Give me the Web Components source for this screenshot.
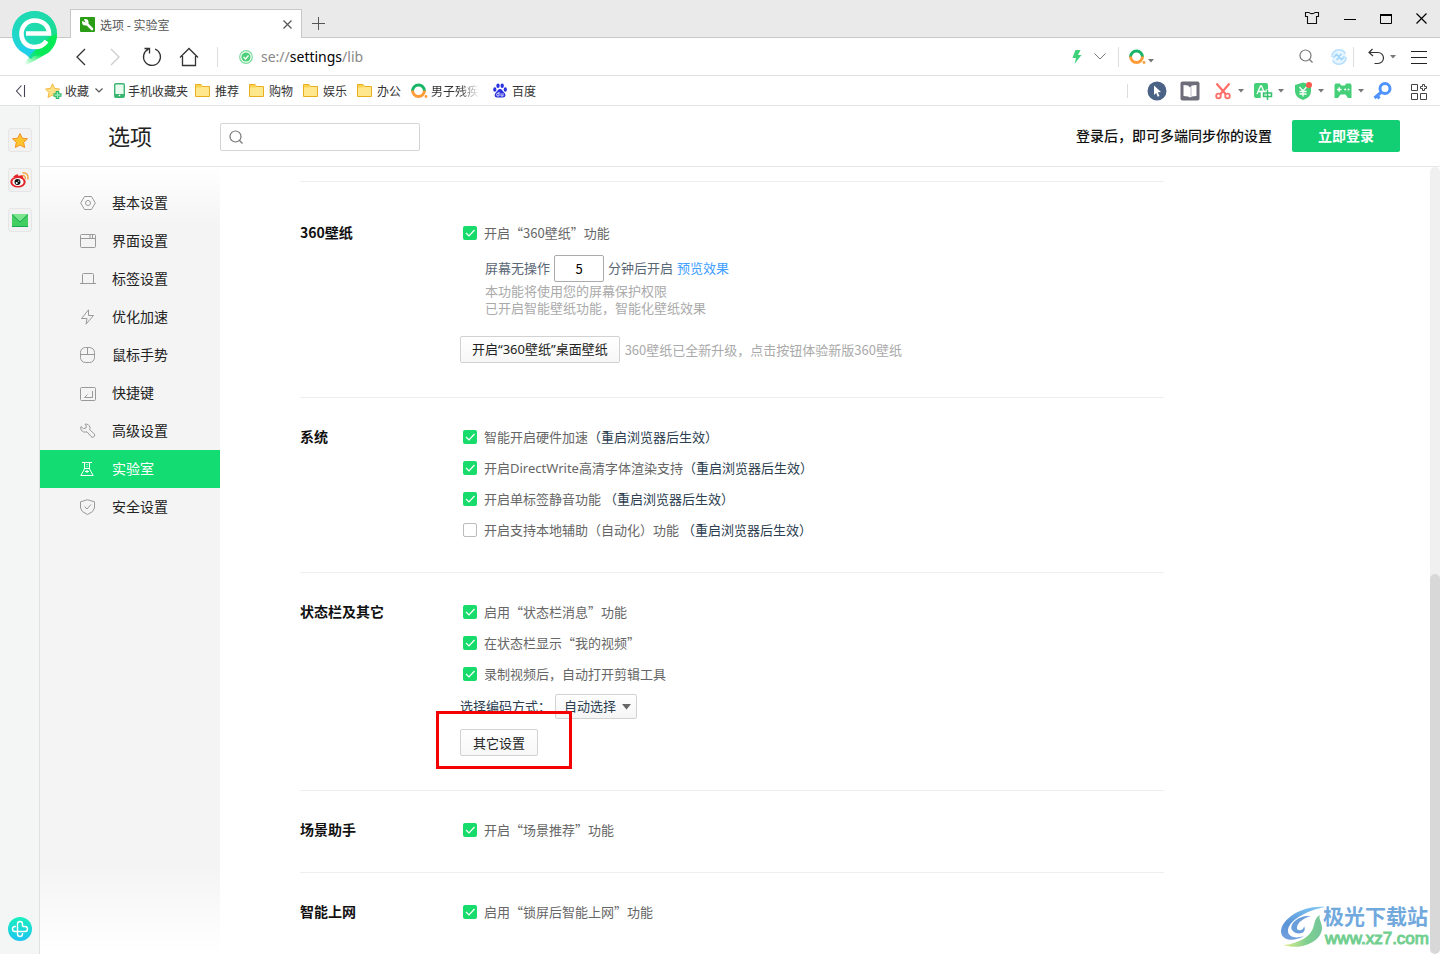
<!DOCTYPE html>
<html lang="zh-CN">
<head>
<meta charset="utf-8">
<title>选项 - 实验室</title>
<style>
html,body{margin:0;height:100%}
body{font:13px/17px "Noto Sans CJK SC","Open Sans",sans-serif;color:#333;background:#fff;overflow:hidden}
</style>
</head>
<body>
<browser-app></browser-app>
<script>
const define=(name,html,setup)=>customElements.define(name,class extends HTMLElement{
  connectedCallback(){
    if(this.shadowRoot)return;
    const t=document.createElement('template');
    t.innerHTML=typeof html==='function'?html(this):html;
    this.attachShadow({mode:'open'}).append(t.content.cloneNode(true));
    if(setup)setup(this,this.shadowRoot);
  }
});
const BTN='button{appearance:none;border:0;background:none;padding:0;margin:0;font:inherit;color:inherit;display:flex;align-items:center;justify-content:center;cursor:pointer}';
const ring='<path d="M2.5 9A6 6 0 0 1 14.5 9" fill="none" stroke="#18b566" stroke-width="3"/><path d="M2.5 8.5A6 6 0 0 0 14.5 8.5" fill="none" stroke="#ff9c38" stroke-width="3"/><circle cx="16" cy="14.5" r="1.4" fill="#ff9c38"/>';
/* name: [width, height, drawing] */
const ICONS={
logo:[48,58,'<defs><linearGradient id="g" x1="1" y1="0.4" x2="0" y2="0.8"><stop offset="0" stop-color="#10e060"/><stop offset=".45" stop-color="#1fdfa8"/><stop offset="1" stop-color="#20d2f2"/></linearGradient><linearGradient id="t" gradientUnits="userSpaceOnUse" x1="36" y1="36" x2="16" y2="57"><stop offset=".35" stop-color="#06ea58"/><stop offset="1" stop-color="#06ea58" stop-opacity="0"/></linearGradient><linearGradient id="top" x1="0" y1="0" x2="0" y2="1"><stop offset="0" stop-color="#1fd9b4"/><stop offset="1" stop-color="#1fd9b4" stop-opacity="0"/></linearGradient></defs><circle cx="23.500" cy="23.500" r="22.500" fill="url(#g)"/><circle cx="23.500" cy="23.500" r="22.500" fill="url(#top)"/><path d="M5 36L20 49L32 36z" fill="#20cfe8"/><path d="M46 24C46 33 42 39 37 43L14 56H12L20 44L40 26z" fill="url(#t)"/><path d="M15 23.500H38C38 15.500 31.500 10.500 23.500 10.500C16 10.500 10.500 16.500 10.500 24C10.500 31.500 16 37 23.500 37C29 37 33 35 35.500 31" fill="none" stroke="#fff" stroke-width="4.600"/>'],
wrench:[15,15,'<rect width="15" height="15" rx="1" fill="#2a9c16"/><path d="M6 6L12 12" stroke="#fff" stroke-width="2.600" stroke-linecap="round"/><circle cx="5.300" cy="5.300" r="3.200" fill="#fff"/><path d="M5.500 5.500L1.500 3.500L3.500 1.500z" fill="#2a9c16"/>'],
x:[9,9,'<path d="M.5 .5L8.500 8.500M8.500 .5L.5 8.500" stroke="#555" stroke-width="1.200"/>'],
plus:[13,13,'<path d="M6.500 0V13M0 6.500H13" stroke="#555"/>'],
shirt:[16,14,'<path d="M5 1.500H1.500V5.500H3.500V12.500H12.500V5.500H14.500V1.500H11C10 3 6 3 5 1.500z" fill="none" stroke="#111" stroke-width="1.100"/>'],
min:[12,12,'<path d="M0 7.500H12" stroke="#000"/>'],
max:[12,12,'<path d="M.5 2.500H11.500V11.500H.5z" fill="none" stroke="#000"/><path d="M0 3H12" stroke="#000" stroke-width="2"/>'],
close:[11,11,'<path d="M.5 .5L10.500 10.500M10.500 .5L.5 10.500" stroke="#000" stroke-width="1.200"/>'],
back:[10,18,'<path d="M9 1L1 9L9 17" fill="none" stroke="#333" stroke-width="1.300"/>'],
fwd:[10,18,'<path d="M1 1L9 9L1 17" fill="none" stroke="#ccc" stroke-width="1.300"/>'],
reload:[20,20,'<path d="M13 2A8.500 8.500 0 1 1 6.500 2.200M2.500 1.500H7.500V6.500" fill="none" stroke="#333" stroke-width="1.300"/>'],
home:[20,20,'<path d="M1 10.500L10 1.500L19 10.500M3.500 9V18.500H16.500V9" fill="none" stroke="#333" stroke-width="1.300"/>'],
secure:[14,14,'<circle cx="7" cy="7" r="6.300" fill="none" stroke="#7bdc9c" stroke-width="1.200"/><circle cx="7" cy="7" r="4.600" fill="#4bcf79"/><path d="M4.500 7L6.500 9L9.500 5.500" fill="none" stroke="#fff" stroke-width="1.200"/>'],
bolt:[10,14,'<path d="M3.500 0H8.500L6 5H9.500L2.500 14L4 8H.5z" fill="#3fd07a"/>'],
chev:[12,7,'<path d="M.5 .5L6 6L11.500 .5" fill="none" stroke="#777"/>'],
chevs:[8,5,'<path d="M.5 .5L4 4L7.500 .5" fill="none" stroke="#555" stroke-width="1.200"/>'],
ring:[18,17,ring],
caret:[6,4,'<path d="M0 0H6L3 3.500z" fill="#777"/>'],
search:[15,15,'<circle cx="6.500" cy="6.500" r="5.500" fill="none" stroke="#777" stroke-width="1.200"/><path d="M10.500 10.500L13.500 13.500" stroke="#777" stroke-width="1.200"/>'],
shield360:[16,16,'<circle cx="8" cy="8" r="7.200" fill="#e6f5ff" stroke="#b5dffd" stroke-width="1.600" stroke-dasharray="19 3.600"/><path d="M2.500 8.500L5.500 5.500L10.500 10.500L13.500 7.500M5.500 11L8 8.500M8 7.500L10.500 5" fill="none" stroke="#9fd5fb" stroke-width="1.600"/>'],
undo:[16,17,'<path d="M4.500 1L1 4.500L5 8M1 4.500H10A5.500 5.500 0 0 1 10 15.500H6.500" fill="none" stroke="#333" stroke-width="1.200"/>'],
menu:[16,14,'<path d="M0 1.500H16M0 7.500H16M0 13.500H16" stroke="#222"/>'],
fold:[10,12,'<path d="M5.500 .5L.5 6L5.500 11.500M8.500 0V12" fill="none" stroke="#445" stroke-width="1.100"/>'],
fav:[17,16,'<path d="M7.500 .8L9.600 5.400L14.500 6L11 9.500L11.700 14.500L7.500 12L3 14.500L4 9.500L.6 6L5.500 5.400z" fill="#ffe187" stroke="#f6b83d"/><path d="M12.500 8V16M8.500 12H16.500" stroke="#26b866" stroke-width="3.600"/><path d="M12.500 9V15M9.500 12H15.500" stroke="#9beab9" stroke-width="1.300"/>'],
phone:[11,15,'<rect x=".7" y=".7" width="9.600" height="13.600" rx="1.200" fill="#e9faef" stroke="#3bb670" stroke-width="1.400"/><path d="M1 11H10V14H1z" fill="#3bb670"/><circle cx="5.500" cy="12.500" r=".8" fill="#fff"/>'],
folder:[15,13,'<path d="M.5 .5H6L7.500 2.500H14.500V12.500H.5z" fill="#ffe78e" stroke="#e9ae20"/><path d="M1 1H6L7 2.500L6 3.500H1z" fill="#ffd351"/>'],
baidu:[14,15,'<g fill="#2a32df"><ellipse cx="1.800" cy="6.500" rx="1.600" ry="2.200"/><ellipse cx="5" cy="2.700" rx="1.700" ry="2.300"/><ellipse cx="9.200" cy="2.700" rx="1.700" ry="2.300"/><ellipse cx="12.300" cy="6.500" rx="1.600" ry="2.200"/><path d="M7 6C9 6 9.500 8 11 9.500C13.500 11.500 12.500 14.500 10 14.500H4C1.500 14.500 .8 11.500 3 9.500C4.500 8 5 6 7 6z"/></g><path d="M6 10.200H5A1.300 1.300 0 0 0 5 13H6V8.800M8 10.200V13H10V10.200" fill="none" stroke="#fff" stroke-width=".8"/>'],
cursor:[20,20,'<circle cx="10" cy="10" r="9.500" fill="#4a6285"/><path d="M7 4.500L14 11L10.800 11.300L12.500 15L10.700 15.800L9.200 12L7 14z" fill="#fff"/>'],
book:[20,20,'<rect x=".5" y=".5" width="19" height="19" rx="2" fill="#6c6d78"/><path d="M3.500 4L8 4.500L10 6.500L12 4.500L16.500 4V15L12 15.500L10 16.500L8 15.500L3.500 15z" fill="#fff"/><path d="M10 6.500V16L12 15V4.500z" fill="#dcdce2"/>'],
cut:[20,20,'<g fill="none" stroke="#ff6e68" stroke-width="2.200"><path d="M3.500 2.500L13 13.500M16.500 2.500L7 13.500"/><circle cx="5.500" cy="15" r="2.300" stroke-width="1.800"/><circle cx="14.500" cy="15" r="2.300" stroke-width="1.800"/></g>'],
trans:[20,20,'<rect x="1" y="2" width="14" height="15" rx="2" fill="#45cf78"/><path d="M4 13L7.500 5H8.500L12 13M5.500 10.500H10.500" fill="none" stroke="#fff" stroke-width="1.300"/><path d="M14.500 8.500V19.500M9.500 11.500H19.500V16H9.500z" fill="none" stroke="#fff" stroke-width="3.500"/><path d="M14.500 9V19M10.500 12H18.500V15.500H10.500z" fill="none" stroke="#36c16c" stroke-width="1.500"/>'],
yen:[20,20,'<path d="M10 1.500L18 4V10C18 14.500 14.500 17.500 10 19C5.500 17.500 2 14.500 2 10V4z" fill="#45cf78"/><path d="M6.500 6L10 10L13.500 6M10 10V15.500M6.500 10.500H13.500M6.500 13H13.500" fill="none" stroke="#fff" stroke-width="1.300"/><circle cx="16" cy="4" r="3" fill="#fa5b50"/>'],
game:[20,20,'<path d="M2.500 2.500H7L8 4.500H12L13 2.500H17.500L18.500 4V17H15L12.500 13.500H7.500L5 17H1.500V4z" fill="#45cf78"/><path d="M4 8.500H8.500M6.200 6.200V10.800" stroke="#fff" stroke-width="1.400"/><circle cx="12.200" cy="8.500" r="1" fill="#fff"/><circle cx="15.500" cy="8.500" r="1" fill="#fff"/>'],
key:[20,20,'<circle cx="12" cy="7.500" r="5" fill="none" stroke="#4f93ff" stroke-width="3"/><path d="M8.500 11L1.500 17M4 14.500L6.500 17.500" fill="none" stroke="#4f93ff" stroke-width="3"/>'],
apps:[20,20,'<path d="M3.500 3.500H9.500V9.500H3.500zM3.500 12.500H9.500V18.500H3.500zM12.500 12.500H18.500V18.500H12.500z" fill="none" stroke="#444"/><path d="M14.500 3.500H16.500V5.500H18.500V7.500H16.500V9.500H14.500V7.500H12.500V5.500H14.500z" fill="none" stroke="#444"/>'],
star:[16,15,'<path d="M8 .5L10.300 5.200L15.500 5.800L11.700 9.300L12.600 14.500L8 12L3.400 14.500L4.300 9.300L.5 5.800L5.700 5.200z" fill="#ffc52e" stroke="#f29227"/>'],
weibo:[20,16,'<ellipse cx="8" cy="10" rx="7.700" ry="5.500" fill="#e3252b"/><path d="M3 5Q8 0 8.500 4Q14 2 13 6L8 7z" fill="#e3252b"/><ellipse cx="8" cy="10" rx="5.600" ry="4" fill="#fff"/><circle cx="7.500" cy="10" r="3" fill="#111"/><circle cx="6.700" cy="11" r="1.100" fill="#fff"/><circle cx="8.700" cy="9.200" r=".6" fill="#fff"/><path d="M12 3.500Q15.500 3 15.500 7M12.500 .8Q19 .5 18 7.500" fill="none" stroke="#f4a13b" stroke-width="1.400"/>'],
mail:[16,13,'<rect width="16" height="13" rx="1" fill="#43ce62"/><path d="M0 0H16L8 8z" fill="#7ae58d"/><path d="M0 .5L8 8L16 .5M0 12.500H16" fill="none" stroke="#1ba552"/>'],
cross:[24,24,'<defs><linearGradient id="c" x2="0" y2="1"><stop stop-color="#19f0be"/><stop offset="1" stop-color="#1cc4f0"/></linearGradient></defs><circle cx="12" cy="12" r="12" fill="url(#c)"/><path d="M14.500 9.500V7A2.500 2.500 0 0 0 9.500 7V17A2.500 2.500 0 0 0 14.500 17V16M14.500 9.500H17A2.500 2.500 0 0 1 17 14.500H7A2.500 2.500 0 0 1 7 9.500H8" fill="none" stroke="#fff" stroke-width="1.400"/>'],
hex:[16,16,'<path d="M4.500 1.500H11.500L15.300 8L11.500 14.500H4.500L.7 8z"/><circle cx="8" cy="8" r="2.500"/>'],
win:[16,16,'<rect x=".5" y="1.500" width="15" height="13" rx="1"/><path d="M.5 5.500H15.500M10 2V5M12.500 2V5"/>'],
tab:[16,16,'<path d="M0 12.500H16M2.500 12V3.500Q2.500 2.500 3.500 2.500H12.500Q13.500 2.500 13.500 3.500V12"/>'],
flash:[16,16,'<path d="M8.500 .8L1.500 9.500H7L6 15.200L13.500 6.500H8.500z"/>'],
mouse:[16,16,'<rect x=".5" y=".5" width="14" height="15" rx="5"/><path d="M.5 7.500H14.500M7.500 .5V7.500"/>'],
keyb:[16,16,'<rect x=".5" y="2.500" width="15" height="13" rx="1"/><path d="M12.500 6V12.500H4.500L7.500 9.500"/>'],
tool:[16,16,'<path d="M5 1.200Q9 .5 10 4.500Q10 6 9.500 6.500L14.500 11Q15.500 13.500 13 14.300Q12 14.500 11 13.500L7 8.800Q3 10 1.200 7Q.3 5 1 3.500L3.500 5.700L6 5L6.300 3z"/>'],
lab:[16,16,'<path d="M2 1.500H12M4.500 2V8L.8 14.500H13.200L9.500 8V2M4.500 7.500H9.500M5 10.500H9"/><path d="M7 3V13" stroke-dasharray="1 1"/>'],
safe:[16,16,'<path d="M7.500 .7L14.500 2.800V9Q14 13 7.500 15.500Q1 13 .5 9V2.800z"/><path d="M4.500 7.500L7 10L11 5.500"/>'],
drop:[9,6,'<path d="M0 0H9L4.500 5.500z" fill="#666"/>'],
swirl:[46,44,'<defs><linearGradient id="w" x1=".7" y1="0" x2=".4" y2="1"><stop stop-color="#7cc3f2"/><stop offset=".6" stop-color="#5a93d6"/><stop offset="1" stop-color="#6f9fdd"/></linearGradient><linearGradient id="v" x2="1" y2="0"><stop stop-color="#e6ee8f"/><stop offset=".6" stop-color="#7fd08f"/><stop offset="1" stop-color="#74c59a"/></linearGradient></defs><path d="M45 2C22 0 1 14 1 27C2 36 14 37 24 31C16 34 8 32 8 26C8 16 25 6 45 2z" fill="url(#w)"/><path d="M31 11C18 10 9 19 12 25C16 31 28 29 24 21C24 26 16 27 17 22C18 17 24 13 31 11z" fill="#6a9edb"/><path d="M40 10C31 15 38 24 25 33C18 37 10 40 3 40C22 46 42 36 42 23C42 17 38 14 40 10z" fill="url(#v)"/>']
};
define('ui-icon',el=>{const [w,h,d]=ICONS[el.getAttribute('name')];
 return `<style>:host{display:block;flex:none;width:${w}px;height:${h}px}svg{display:block;overflow:visible}.line{fill:none;stroke:currentColor}</style><svg width="${w}" height="${h}" viewBox="0 0 ${w} ${h}" aria-hidden="true"><g${el.hasAttribute('line')?' class="line"':''}>${d}</g></svg>`});
define('v-rule','<style>:host{display:block;flex:none;width:1px;height:20px;background:#ddd}</style>');
define('icon-button',el=>`<style>:host{display:block;flex:none}${BTN}</style><button aria-label="${el.getAttribute('label')}"><ui-icon name="${el.getAttribute('name')}"></ui-icon></button>`);

define('tab-strip',`<style>:host{display:flex;box-sizing:border-box;height:38px;background:#eaeaea;border-bottom:1px solid #c8c8c8;padding:9px 13px 0 70px}
.tab{display:flex;align-items:center;box-sizing:border-box;width:232px;height:29px;background:#fff;border:1px solid #c8c8c8;border-bottom:0;padding:0 9px;font-size:12px;color:#555}
.tab span{flex:1;margin-left:5px}.new{margin:8px 0 0 10px}
.win{display:flex;gap:24px;margin-left:auto;height:18px;align-items:center}</style>
<div class="tab"><ui-icon name="wrench"></ui-icon><span>选项 - 实验室</span><icon-button name="x" label="关闭标签"></icon-button></div>
<icon-button class="new" name="plus" label="新标签"></icon-button>
<div class="win"><icon-button name="shirt" label="皮肤"></icon-button><icon-button name="min" label="最小化"></icon-button><icon-button name="max" label="最大化"></icon-button><icon-button name="close" label="关闭"></icon-button></div>`);

define('nav-bar',`<style>:host{display:flex;align-items:center;box-sizing:border-box;height:38px;border-bottom:1px solid #e2e2e2;padding:0 13px 0 76px}
.nav{display:flex;align-items:center}.fwd{margin:0 22px 0 24px}.home{margin:0 18px 0 17px}
.url{flex:1;display:flex;align-items:center;gap:8px;margin-left:21px;font:14px/20px "Noto Sans","Open Sans",sans-serif;color:#888}
.url b{font-weight:400;color:#000}
.mid{display:flex;align-items:center;gap:12px}
.find{display:flex;align-items:center;gap:2px;margin-left:9px}
input{border:0;outline:0;width:137px;box-sizing:border-box;padding:0 4px;font:inherit;background:none}
.end{display:flex;align-items:center}
.a{margin-left:17px}.b{margin-left:6px}.c{margin-left:14px}.d{margin-left:6px}.e{margin-left:15px}.f{margin-top:8px}</style>
<div class="nav"><icon-button name="back" label="后退"></icon-button><icon-button class="fwd" name="fwd" label="前进"></icon-button><icon-button name="reload" label="刷新"></icon-button><icon-button class="home" name="home" label="主页"></icon-button><v-rule></v-rule></div>
<div class="url"><ui-icon name="secure"></ui-icon><span>se://<b>settings</b>/lib</span></div>
<div class="mid"><ui-icon name="bolt"></ui-icon><icon-button name="chev" label="展开"></icon-button><v-rule></v-rule></div>
<div class="find"><ui-icon name="ring"></ui-icon><ui-icon class="f" name="caret"></ui-icon><input aria-label="搜索"></div>
<div class="end"><icon-button class="b" name="search" label="搜索"></icon-button><ui-icon class="a" name="shield360"></ui-icon><v-rule class="b"></v-rule><icon-button class="c" name="undo" label="恢复"></icon-button><ui-icon class="d" name="caret"></ui-icon><icon-button class="e" name="menu" label="菜单"></icon-button></div>`);

define('bookmark-item',el=>`<style>:host{display:block;flex:none}a{display:flex;align-items:center;gap:5px;color:#333;text-decoration:none;white-space:nowrap}
:host([tight]) a{gap:3px}:host([fade]) span{width:48px;overflow:hidden;-webkit-mask-image:linear-gradient(90deg,#000 60%,transparent)}</style><a href="#"><ui-icon name="${el.getAttribute('icon')}"></ui-icon><span><slot></slot></span></a>`);
define('bookmark-bar',`<style>:host{display:flex;align-items:center;box-sizing:border-box;height:30px;border-bottom:1px solid #e2e2e2;padding:0 12px 0 16px;font-size:12px}
.list{display:flex;align-items:center;gap:10px}.first{display:flex;align-items:center;gap:6px;margin-left:9px}
.tools{display:flex;align-items:center;margin-left:auto;gap:13px}.pairs{display:flex;align-items:center;gap:9px}.p{display:flex;align-items:center;gap:5px}
v-rule{height:14px;margin-right:6px}.tools .last{margin-left:2px}.ring{margin-left:-1px}.baidu{margin-left:4px}.phone{margin:0 -3px 0 1px}</style>
<div class="list"><icon-button name="fold" label="收起"></icon-button><span class="first"><bookmark-item icon="fav" tight>收藏</bookmark-item><ui-icon name="chevs"></ui-icon></span>
<bookmark-item class="phone" icon="phone" tight>手机收藏夹</bookmark-item><bookmark-item icon="folder">推荐</bookmark-item><bookmark-item icon="folder">购物</bookmark-item><bookmark-item icon="folder">娱乐</bookmark-item><bookmark-item icon="folder">办公</bookmark-item><bookmark-item class="ring" icon="ring" tight fade>男子残疾</bookmark-item><bookmark-item class="baidu" icon="baidu">百度</bookmark-item></div>
<div class="tools"><v-rule></v-rule><icon-button name="cursor" label="鼠标"></icon-button><icon-button name="book" label="阅读"></icon-button>
<div class="pairs"><span class="p"><icon-button name="cut" label="截图"></icon-button><ui-icon name="caret"></ui-icon></span><span class="p"><icon-button name="trans" label="翻译"></icon-button><ui-icon name="caret"></ui-icon></span><span class="p"><icon-button name="yen" label="网银"></icon-button><ui-icon name="caret"></ui-icon></span><span class="p"><icon-button name="game" label="游戏"></icon-button><ui-icon name="caret"></ui-icon></span><icon-button name="key" label="登录管家"></icon-button></div>
<icon-button class="last" name="apps" label="扩展"></icon-button></div>`);

define('side-dock',`<style>:host{display:flex;flex-direction:column;align-items:center;box-sizing:border-box;width:40px;flex:none;background:#f4f6f6;border-right:1px solid #e0e0e0;padding:22px 0 13px;gap:16px}
${BTN}button{box-sizing:border-box;width:24px;height:24px;background:#f2f2f2;border:1px solid #e6e6e6;border-radius:3px}.low{margin-top:auto}</style>
<button aria-label="收藏"><ui-icon name="star"></ui-icon></button><button aria-label="微博"><ui-icon name="weibo"></ui-icon></button><button aria-label="邮箱"><ui-icon name="mail"></ui-icon></button><icon-button class="low" name="cross" label="医疗"></icon-button>`);

define('options-header',`<style>:host{display:flex;align-items:center;flex:none;box-sizing:border-box;height:61px;border-bottom:1px solid #e8e8e8;padding:0 40px 0 68px}
h1{margin:0;width:112px;padding-bottom:2px;font-size:22px;line-height:30px;font-weight:400;color:#222}
label{display:flex;align-items:center;gap:8px;box-sizing:border-box;width:200px;height:28px;border:1px solid #d5d5d5;border-radius:2px;padding:0 8px;margin-top:2px}
input{flex:1;min-width:0;border:0;outline:0;font:inherit}
p{margin:0 20px 0 auto;padding-bottom:2px;font-size:14px;font-weight:500;color:#111}
${BTN}button{width:108px;height:32px;border-radius:2px;background:#12cf74;color:#fff;font-size:14px;font-weight:700;padding-bottom:2px}</style>
<h1>选项</h1><label><ui-icon name="search"></ui-icon><input aria-label="搜索设置"></label><p>登录后，即可多端同步你的设置</p><button>立即登录</button>`);

define('menu-item',el=>`<style>:host{display:block}a{display:flex;align-items:center;height:38px;padding-left:40px;gap:16px;font-size:14px;color:#222;text-decoration:none}ui-icon{color:#999}span{padding-bottom:2px}
:host([active]) a{background:#12dc72;color:#fff}:host([active]) ui-icon{color:#fff}</style><a href="#"><ui-icon line name="${el.getAttribute('icon')}"></ui-icon><span><slot></slot></span></a>`);
define('side-menu',`<style>:host{display:block;flex:none;box-sizing:border-box;width:180px;padding-top:17px;background:linear-gradient(#fff,#f4f4f4 60px,#f4f4f4 calc(100% - 90px),#fff)}</style><nav>
<menu-item icon="hex">基本设置</menu-item><menu-item icon="win">界面设置</menu-item><menu-item icon="tab">标签设置</menu-item><menu-item icon="flash">优化加速</menu-item><menu-item icon="mouse">鼠标手势</menu-item><menu-item icon="keyb">快捷键</menu-item><menu-item icon="tool">高级设置</menu-item><menu-item icon="lab" active>实验室</menu-item><menu-item icon="safe">安全设置</menu-item></nav>`);

define('settings-section',el=>`<style>:host{display:grid;grid-template-columns:160px 1fr;border-top:1px solid #eee;padding:23px 0 27px;max-width:864px}:host([first]){padding-top:35px}
h2{margin:0;font-size:14px;line-height:31px;font-weight:700;color:#111}</style><h2>${el.getAttribute('heading')}</h2><div><slot></slot></div>`);
define('check-row',el=>`<style>:host{display:block}label{display:inline-flex;align-items:center;height:31px;color:#666;white-space:pre}
input{appearance:none;box-sizing:border-box;width:14px;height:14px;margin:0 7px 0 3px;border:1px solid #bbb;border-radius:2px;background:#fff}
input:checked{border:0;background:#17db6b}.box{display:grid}.box>*{grid-area:1/1}svg{margin-left:3px;pointer-events:none;z-index:1}:host(:not([checked])) svg{display:none}</style>
<label><span class="box"><input type="checkbox"${el.hasAttribute('checked')?' checked':''}><svg width="14" height="14" aria-hidden="true"><path d="M3 7L6 10L11.500 4" fill="none" stroke="#fff" stroke-width="1.200"/></svg></span><span><slot></slot></span></label>`);
define('push-button',`<style>:host{display:inline-block}${BTN}button{box-sizing:border-box;height:27px;padding:0 11px;border:1px solid #d2d2d2;border-radius:2px;background:linear-gradient(#fff,#f7f7f7);color:#222;white-space:nowrap}:host([wide]) button{padding:0 12px}</style><button><slot></slot></button>`);
define('settings-content',`<style>:host{display:block;flex:1;min-width:0;padding:14px 80px 0;overflow:hidden}
.note{color:#2c3e50}.latin{font-family:"Noto Sans","Open Sans",sans-serif}
.q{font-family:"Noto Sans","Noto Sans CJK SC",sans-serif}
.idle{display:flex;align-items:center;gap:4px;height:27px;margin:7px 0 0 25px;color:#5a6775}
.idle label,.idle span,.idle a{padding-bottom:2px}
.idle input{box-sizing:border-box;width:50px;height:27px;border:1px solid #aaa;border-radius:2px;text-align:center;font:13px "Noto Sans CJK SC",sans-serif;color:#000}
.idle a{color:#409eff;text-decoration:none}
.hint{margin:0 0 0 25px;color:#aaa}
.wall{display:flex;align-items:center;gap:5px;margin:20px 0 7px;color:#aaa}
.codec{display:flex;align-items:center;height:33px;margin-top:1px;color:#2c3e50}.codec label{padding-bottom:2px}
.pick{display:grid;align-items:center;margin-left:4px}.pick>*{grid-area:1/1}.pick ui-icon{justify-self:end;margin-right:6px;pointer-events:none}
select{appearance:none;box-sizing:border-box;width:82px;height:25px;border:1px solid #d2d2d2;border-radius:2px;background:linear-gradient(#fff,#f5f5f5);padding:0 8px 2px;font:inherit;color:#2c3e50}
.other{position:relative;display:flex;margin:6px 0 7px}
.mark{position:absolute;box-sizing:border-box;left:-24px;top:-18px;width:136px;height:58px;border:3px solid #f40000;pointer-events:none}</style>
<settings-section first heading="360壁纸"><check-row checked>开启“360壁纸”功能</check-row>
<div class="idle"><label for="m">屏幕无操作</label><input id="m" value="5"><span>分钟后开启</span><a href="#">预览效果</a></div>
<p class="hint">本功能将使用您的屏幕保护权限<br>已开启智能壁纸功能，智能化壁纸效果</p>
<div class="wall"><push-button><span class="q">开启“360壁纸”桌面壁纸</span></push-button><span>360壁纸已全新升级，点击按钮体验新版360壁纸</span></div></settings-section>
<settings-section heading="系统"><check-row checked>智能开启硬件加速<span class="note">（重启浏览器后生效）</span></check-row><check-row checked>开启<span class="latin">DirectWrite</span>高清字体渲染支持<span class="note">（重启浏览器后生效）</span></check-row><check-row checked>开启单标签静音功能 <span class="note">（重启浏览器后生效）</span></check-row><check-row>开启支持本地辅助（自动化）功能 <span class="note">（重启浏览器后生效）</span></check-row></settings-section>
<settings-section heading="状态栏及其它"><check-row checked>启用“状态栏消息”功能</check-row><check-row checked>在状态栏显示“我的视频”</check-row><check-row checked>录制视频后，自动打开剪辑工具</check-row>
<div class="codec"><label for="c">选择编码方式：</label><span class="pick"><select id="c"><option>自动选择</option></select><ui-icon name="drop"></ui-icon></span></div>
<div class="other"><push-button wide>其它设置</push-button><span class="mark"></span></div></settings-section>
<settings-section heading="场景助手"><check-row checked>开启“场景推荐”功能</check-row></settings-section>
<settings-section heading="智能上网"><check-row checked>启用“锁屏后智能上网”功能</check-row></settings-section>`);
define('scroll-track',`<style>:host{display:grid;grid-template-rows:407fr 380fr;flex:none;width:10px;background:#f0f0f0;border-radius:5px}i{grid-row:2;background:#d8d8d8;border-radius:5px}</style><i></i>`);
define('site-mark',`<style>:host{display:flex;align-items:center;position:absolute;right:11px;bottom:5px;pointer-events:none}
ui-icon{margin-right:-3px}b{display:block;font:700 21px/24px "Liberation Sans","Noto Sans CJK SC",sans-serif;color:#72a9dd}span{display:block;font:17px/20px "Liberation Sans",sans-serif;-webkit-text-stroke:1px #72cf90;color:#72cf90;margin-left:2px}</style><ui-icon name="swirl"></ui-icon><div><b>极光下载站</b><span>www.xz7.com</span></div>`);
define('browser-app',`<style>:host{display:flex;flex-direction:column;position:relative;height:100vh;overflow:hidden}
.logo{position:absolute;left:11px;top:10px}.body,.row{display:flex;flex:1;min-height:0}.page{display:flex;flex-direction:column;flex:1;min-width:0}</style>
<tab-strip></tab-strip><nav-bar></nav-bar><bookmark-bar></bookmark-bar><ui-icon class="logo" name="logo"></ui-icon>
<div class="body"><side-dock></side-dock><main class="page"><options-header></options-header><div class="row"><side-menu></side-menu><settings-content></settings-content><scroll-track></scroll-track></div></main></div><site-mark></site-mark>`);
</script>
</body>
</html>
